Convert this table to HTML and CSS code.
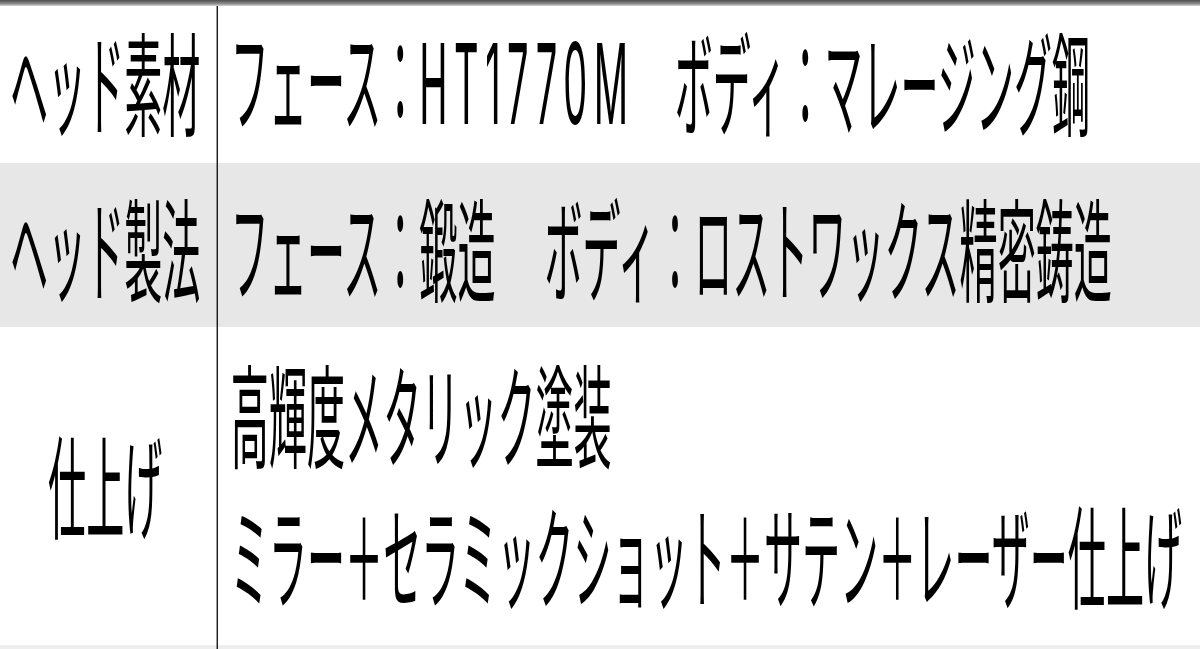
FILE: index.html
```html
<!DOCTYPE html>
<html lang="ja">
<head>
<meta charset="utf-8">
<title>ヘッド仕様</title>
<link rel="stylesheet" href="styles.css">
</head>
<body>
<div class="sheet">
  <div class="rule"></div>
  <div class="row row-a">
    <div class="label">ヘッド素材</div>
    <div class="value"><span class="part">フェース：<span class="latin">HT1770M</span></span><span class="part next">ボディ：マレージング鋼</span></div>
  </div>
  <div class="row row-b alt">
    <div class="label">ヘッド製法</div>
    <div class="value"><span class="part">フェース：鍛造</span><span class="part next">ボディ：ロストワックス精密鋳造</span></div>
  </div>
  <div class="row row-c">
    <div class="label">仕上げ</div>
    <div class="value multi">
      <div class="line">高輝度メタリック塗装</div>
      <div class="line">ミラー＋セラミックショット＋サテン＋レーザー仕上げ</div>
    </div>
  </div>
  <div class="row row-d alt2">
    <div class="label"></div>
    <div class="value"></div>
  </div>
</div>
</body>
</html>
```
FILE: styles.css
```css
html, body {
  margin: 0;
  padding: 0;
  background: #ffffff;
  overflow: hidden;
}

body {
  width: 1200px;
  height: 649px;
}

.sheet {
  width: 3530px;
  transform: scaleX(0.34);
  transform-origin: 0 0;
  font-family: "Noto Sans CJK JP", "Noto Sans", sans-serif;
  font-size: 112px;
  font-weight: 400;
  color: #000;
}

.rule {
  height: 6px;
  background: linear-gradient(#4e4e4e, #8a8a8a 60%, #d6d6d6);
}

.row {
  display: grid;
  grid-template-columns: 641px 1fr;
}

.row-a { height: 157px; }
.row-b { height: 164px; }
.row-c { height: 318px; }
.row-d { height: 20px; }

.alt { background: #e7e7e7; }
.alt2 { background: #eeeeee; }

.label {
  box-sizing: border-box;
  border-right: 4px solid #111;
  display: flex;
  align-items: center;
  justify-content: center;
  padding-right: 18px;
  line-height: 1;
  white-space: nowrap;
}

.value {
  display: flex;
  align-items: center;
  padding-left: 38px;
  line-height: 1;
  white-space: nowrap;
}

.row-a > .label,
.row-a > .value { padding-bottom: 11px; }

.row-c > .label,
.row-c > .value { padding-bottom: 8px; }

.multi {
  flex-direction: column;
  align-items: flex-start;
  justify-content: center;
  line-height: 141px;
}

.next { margin-left: 144px; }

.row-a .next { margin-left: 118px; }

.latin {
  font-family: "Inter", "Liberation Sans", sans-serif;
  letter-spacing: 19px;
}
```
